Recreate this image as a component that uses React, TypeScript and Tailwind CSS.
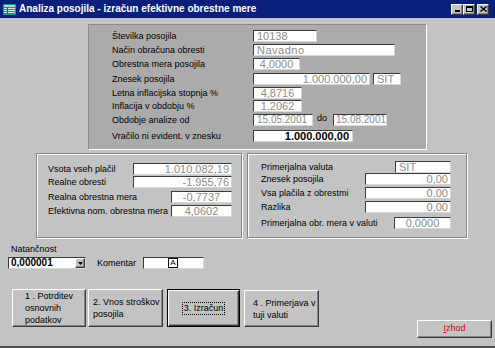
import React from "react";

const fieldBase =
  "flex items-center h-[12px] bg-white border border-t-[#3a3a3a] border-l-[#3a3a3a] border-r-[#d6d6d6] border-b-[#d6d6d6] overflow-hidden leading-none whitespace-nowrap";

const field = `${fieldBase} text-[11px] text-[#8c8c8c]`;

const raised =
  "bg-[#c3c3c3] border border-t-white border-l-white border-r-[#3a3a3a] border-b-[#3a3a3a] shadow-[inset_-1px_-1px_0_#868686]";

const etched =
  "border border-[#868686] shadow-[1px_1px_0_#fff,inset_1px_1px_0_#fff]";

function TitleButton({ children, className = "" }: { children: React.ReactNode; className?: string }) {
  return (
    <div className={`${raised} w-[12px] h-[11px] flex items-center justify-center ${className}`}>
      {children}
    </div>
  );
}

function Row({ label, children, className = "" }: { label: string; children: React.ReactNode; className?: string }) {
  return (
    <div className={`flex items-center h-[12px] ${className}`}>
      <span className="w-[141px] leading-none">{label}</span>
      {children}
    </div>
  );
}

function BoxRow({ label, children, className = "" }: { label: string; children: React.ReactNode; className?: string }) {
  return (
    <div className={`flex items-center justify-between h-[12px] ${className}`}>
      <span className="leading-none">{label}</span>
      {children}
    </div>
  );
}

export default function App() {
  return (
    <div className="w-[495px] h-[348px] bg-[#c3c3c3] flex flex-col overflow-hidden text-[9px] text-black font-['Liberation_Sans',Arial,sans-serif] border-b-2 border-b-[#505050]">
      {/* title bar */}
      <div className="h-[18px] shrink-0 bg-[#0a1f7c] flex items-center pl-[3px] pr-[6px]">
        <svg width="13" height="11" viewBox="0 0 13 11" className="shrink-0">
          <rect x="0" y="0" width="13" height="11" fill="#1a9a7a" />
          <rect x="1" y="1" width="11" height="2" fill="#9be0c8" />
          <rect x="1" y="4" width="11" height="1" fill="#c8f0e0" />
          <rect x="1" y="6" width="11" height="1" fill="#c8f0e0" />
          <rect x="1" y="8" width="11" height="1" fill="#c8f0e0" />
          <rect x="4" y="3" width="1" height="7" fill="#0d6a52" />
        </svg>
        <span className="ml-[3px] text-white font-bold text-[10px] leading-none whitespace-nowrap">
          Analiza posojila - izračun efektivne obrestne mere
        </span>
        <div className="ml-auto flex items-center">
          <TitleButton>
            <div className="w-[5px] h-[2px] bg-black mt-[4px]" />
          </TitleButton>
          <TitleButton>
            <div className="w-[7px] h-[6px] border border-black border-t-2" />
          </TitleButton>
          <TitleButton className="ml-[2px]">
            <svg width="7" height="6" viewBox="0 0 7 6">
              <path d="M0.5 0.5 L6.5 5.5 M6.5 0.5 L0.5 5.5" stroke="#000" strokeWidth="1.4" />
            </svg>
          </TitleButton>
        </div>
      </div>

      {/* top panel */}
      <div className="pl-[88px] pt-[6px]">
        <div className="w-[339px] h-[126px] bg-[#ababab] border border-t-[#8a8a8a] border-l-[#8a8a8a] border-r-white border-b-white pl-[23px] pt-[5px]">
          <Row label="Številka posojila">
            <div className={`${field} w-[64px] pl-[3px]`}>10138</div>
          </Row>
          <Row label="Način obračuna obresti" className="mt-[2px]">
            <div className={`${field} w-[142px] pl-[3px] tracking-[0.5px]`}>Navadno</div>
          </Row>
          <Row label="Obrestna mera posojila" className="mt-[2px]">
            <div className={`${field} w-[47px] justify-center`}>4,0000</div>
          </Row>
          <Row label="Znesek posojila" className="mt-[3px]">
            <div className={`${field} w-[117px] justify-end pr-[2px]`}>1.000.000,00</div>
            <div className={`${field} w-[28px] ml-[3px] pl-[3px]`}>SIT</div>
          </Row>
          <Row label="Letna inflacijska stopnja %" className="mt-[2px]">
            <div className={`${field} w-[49px] justify-center`}>4,8716</div>
          </Row>
          <Row label="Inflacija v obdobju %" className="mt-[1px]">
            <div className={`${field} w-[49px] justify-center`}>1,2062</div>
          </Row>
          <Row label="Obdobje analize  od" className="mt-[2px]">
            <div className={`${fieldBase} text-[10px] text-[#8c8c8c] w-[60px] pl-[3px]`}>15.05.2001</div>
            <span className="w-[20px] pl-[4px] leading-none mb-[4px]">do</span>
            <div className={`${fieldBase} text-[10px] text-[#8c8c8c] w-[54px] pl-[2px]`}>15.08.2001</div>
          </Row>
          <Row label="Vračilo ni evident. v znesku" className="mt-[4px]">
            <div className={`${fieldBase} text-[11px] w-[100px] justify-end pr-[3px] font-bold text-black`}>1.000.000,00</div>
          </Row>
        </div>
      </div>

      {/* result boxes */}
      <div className="flex pl-[36px] mt-[3px] gap-[5px]">
        <div className={`${etched} w-[206px] h-[85px] pl-[11px] pr-[9px] pt-[9px]`}>
          <BoxRow label="Vsota vseh plačil">
            <div className={`${field} w-[99px] justify-end pr-[2px]`}>1.010.082,19</div>
          </BoxRow>
          <BoxRow label="Realne obresti" className="mt-[1px]">
            <div className={`${field} w-[99px] justify-end pr-[2px]`}>-1.955,76</div>
          </BoxRow>
          <BoxRow label="Realna obrestna mera" className="mt-[3px]">
            <div className={`${field} w-[61px] justify-center`}>-0,7737</div>
          </BoxRow>
          <BoxRow label="Efektivna nom. obrestna mera" className="mt-[2px]">
            <div className={`${field} w-[61px] justify-center`}>4,0602</div>
          </BoxRow>
        </div>
        <div className={`${etched} w-[220px] h-[85px] pl-[13px] pr-[15px] pt-[7px]`}>
          <BoxRow label="Primerjalna valuta">
            <div className={`${field} w-[56px] pl-[3px]`}>SIT</div>
          </BoxRow>
          <BoxRow label="Znesek posojila">
            <div className={`${field} w-[86px] justify-end pr-[2px]`}>0,00</div>
          </BoxRow>
          <BoxRow label="Vsa plačila z obrestmi" className="mt-[2px]">
            <div className={`${field} w-[86px] justify-end pr-[2px]`}>0,00</div>
          </BoxRow>
          <BoxRow label="Razlika" className="mt-[2px]">
            <div className={`${field} w-[86px] justify-end pr-[2px]`}>0,00</div>
          </BoxRow>
          <BoxRow label="Primerjalna obr. mera v valuti" className="mt-[4px]">
            <div className={`${field} w-[57px] justify-center`}>0,0000</div>
          </BoxRow>
        </div>
      </div>

      {/* bottom controls */}
      <div className="pl-[8px] flex flex-col">
        <span className="pl-[3px] mt-[6px] leading-[11px]">Natančnost</span>
        <div className="flex items-center mt-[2px] h-[12px]">
          <div className={`${fieldBase} w-[78px] pl-[2px] font-bold text-black text-[10px]`}>
            <span>0,000001</span>
            <div className={`${raised} ml-auto w-[10px] h-[10px] flex items-center justify-center`}>
              <svg width="5" height="3" viewBox="0 0 5 3">
                <path d="M0 0 H5 L2.5 3 Z" fill="#000" />
              </svg>
            </div>
          </div>
          <span className="ml-[11px] w-[46px] leading-none">Komentar</span>
          <div className={`${fieldBase} w-[61px] pl-[24px]`}>
            <div className="w-[10px] h-[10px] border border-black bg-white flex items-center justify-center text-black text-[8px] leading-none">
              A
            </div>
          </div>
        </div>

        <div className="flex items-start mt-[20px]">
          <div className={`${raised} ml-[4px] w-[74px] h-[38px] flex items-center pl-[12px] leading-[12px]`}>
            <span>
              1 . Potrditev
              <br />
              osnovnih
              <br />
              podatkov
            </span>
          </div>
          <div className={`${raised} ml-[2px] w-[75px] h-[38px] flex items-center pl-[4px] leading-[12px]`}>
            <span>
              2. Vnos stroškov
              <br />
              posojila
            </span>
          </div>
          <div className="ml-[4px] w-[73px] h-[38px] border border-black bg-[#c3c3c3] shadow-[inset_1px_1px_0_#fff,inset_-1px_-1px_0_#3a3a3a,inset_-2px_-2px_0_#868686] flex items-center justify-center">
            <span className="border border-dotted border-black px-[1px] leading-[11px]">3. Izračun</span>
          </div>
          <div className={`${raised} ml-[4px] w-[75px] h-[37px] mt-[1px] flex items-center pl-[8px] leading-[12px]`}>
            <span>
              4 . Primerjava v
              <br />
              tuji valuti
            </span>
          </div>
          <div className={`${raised} ml-auto mr-[3px] mt-[31px] w-[75px] h-[18px] flex items-center justify-center text-[#e00000]`}>
            <span>
              <span className="underline">I</span>zhod
            </span>
          </div>
        </div>
      </div>
    </div>
  );
}
